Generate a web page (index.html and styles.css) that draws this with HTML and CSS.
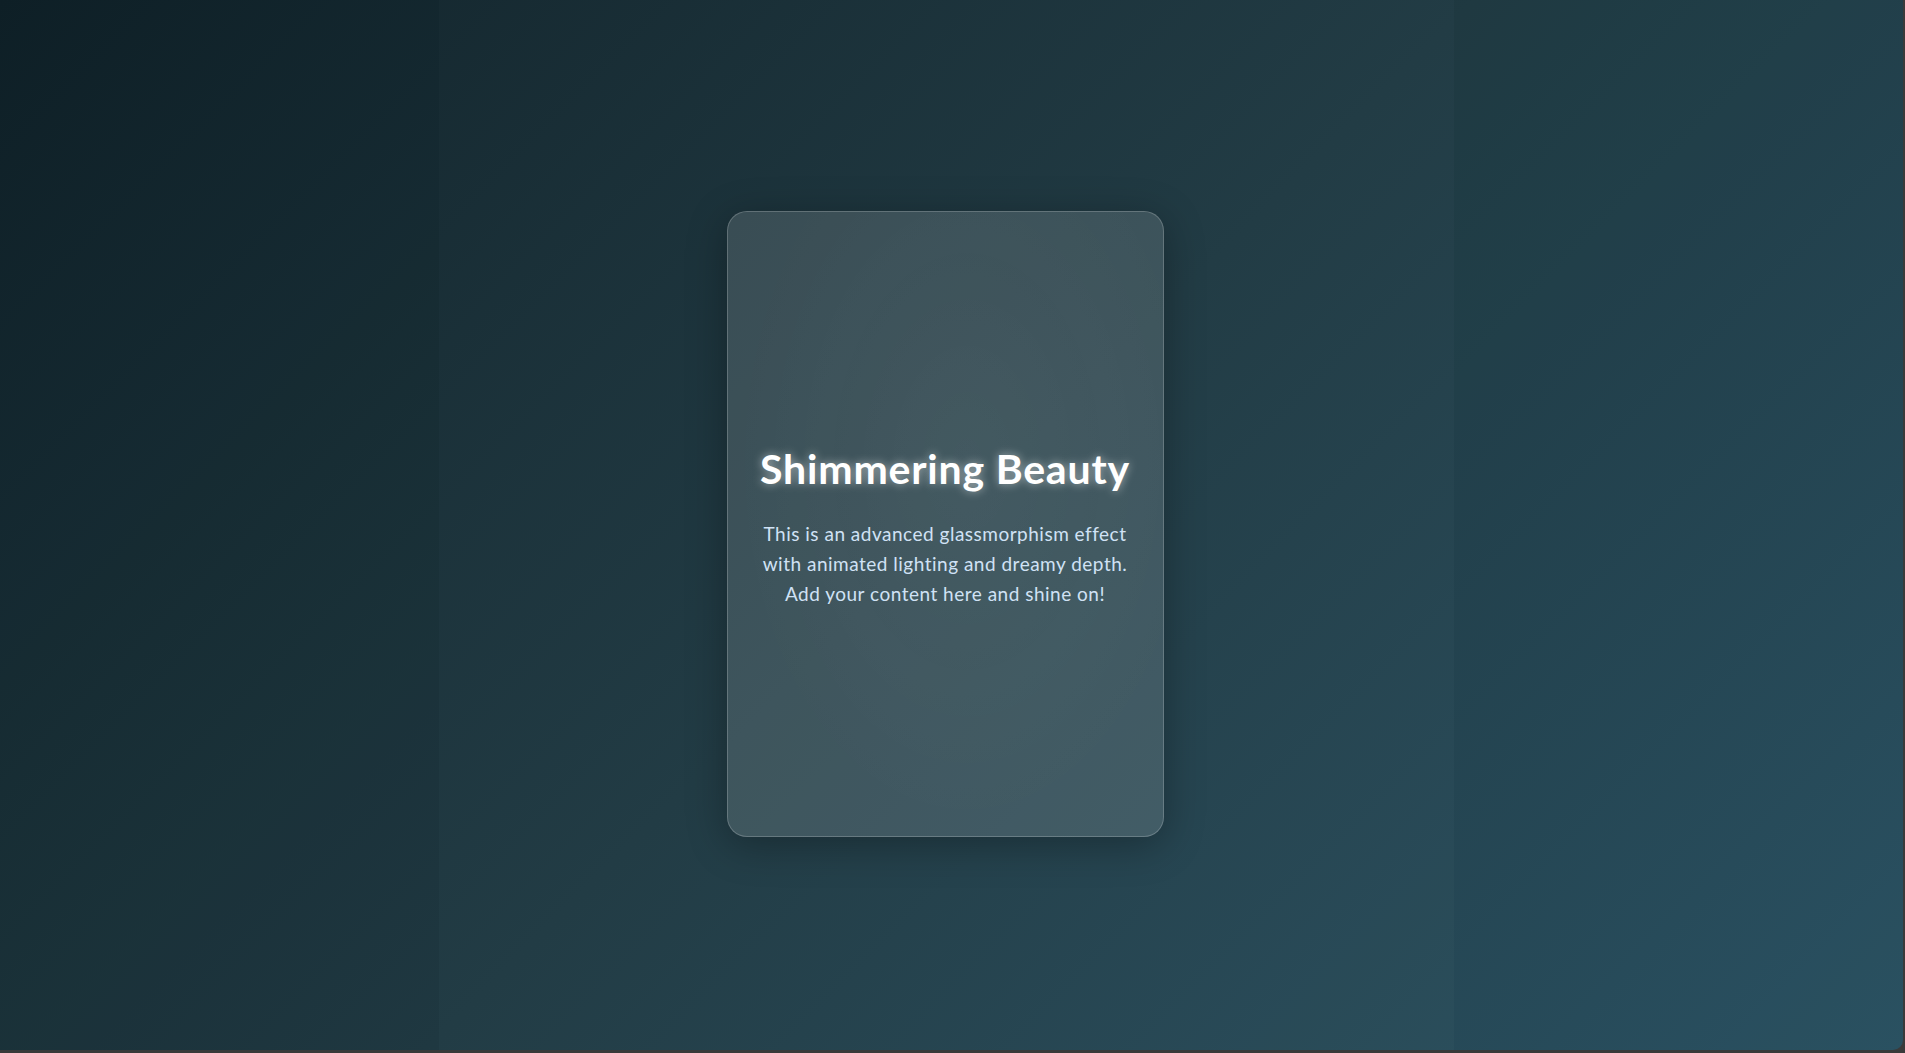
FILE: index.html
```html
<!DOCTYPE html>
<html lang="en">
<head>
<meta charset="utf-8">
<title>Shimmering Beauty</title>
<link rel="stylesheet" href="styles.css">
</head>
<body>
<div class="screen">
  <div class="side side-left"></div>
  <main class="stage">
    <section class="card">
      <h1 class="card-title">Shimmering Beauty</h1>
      <p class="card-text">This is an advanced glassmorphism effect<br>with animated lighting and dreamy depth.<br>Add your content here and shine on!</p>
    </section>
  </main>
  <div class="side side-right"></div>
</div>
</body>
</html>
```

FILE: styles.css
```css
html, body {
  margin: 0;
  padding: 0;
  height: 100%;
}
body {
  background: #3a3a3a;
  overflow: hidden;
  font-family: Lato, "Open Sans", "Noto Sans", sans-serif;
}
.screen {
  width: calc(100% - 2px);
  height: calc(100% - 3px);
  border-bottom-right-radius: 10px;
  overflow: hidden;
  background: linear-gradient(135deg, #0f2027 0%, #203a43 50%, #2c5364 100%);
  display: grid;
  grid-template-columns: 439px 1015px 1fr;
}
.side-left {
  background: rgba(0, 0, 0, 0.02);
}
.side-right {
  background: rgba(0, 20, 40, 0.03);
}
.stage {
  display: flex;
  align-items: center;
  justify-content: center;
  padding-bottom: 3px;
  padding-right: 3px;
  background: rgba(255, 255, 255, 0.012);
}
.card {
  box-sizing: border-box;
  width: 437px;
  height: 626px;
  border-radius: 20px;
  border: 1px solid rgba(255, 255, 255, 0.2);
  background:
    radial-gradient(ellipse at 55% 40%, rgba(255, 255, 255, 0.03), rgba(255, 255, 255, 0) 70%),
    rgba(255, 255, 255, 0.13);
  box-shadow: 0 8px 40px rgba(0, 0, 0, 0.3);
  display: flex;
  flex-direction: column;
  align-items: center;
  justify-content: center;
  padding: 6px 10px 0;
  text-align: center;
}
.card-title {
  margin: 0 0 26px;
  font-size: 41px;
  font-weight: 700;
  letter-spacing: 0.8px;
  line-height: 48px;
  color: #ffffff;
  text-shadow: 0 0 10px rgba(255, 255, 255, 0.55);
  white-space: nowrap;
}
.card-text {
  margin: 0;
  font-size: 19px;
  letter-spacing: 0.5px;
  line-height: 30px;
  color: #d0e2f5;
  white-space: nowrap;
}
```
